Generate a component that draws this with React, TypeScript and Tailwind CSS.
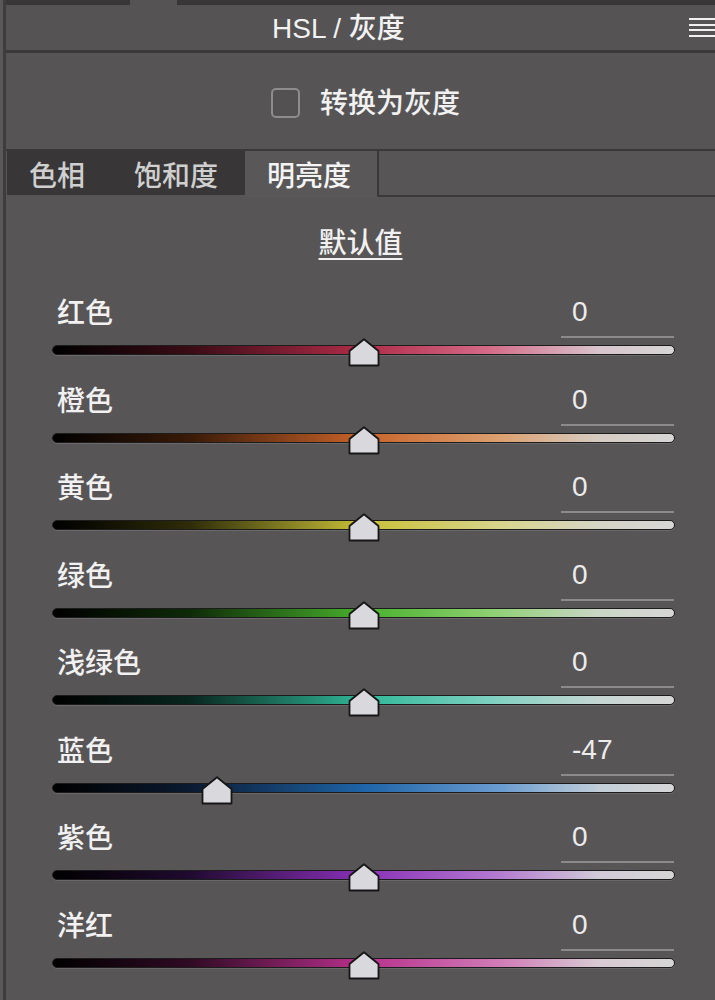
import React from "react";

type Channel = {
  name: string;
  value: number;
  track: string;
};

const channels: Channel[] = [
  {
    name: "红色",
    value: 0,
    track:
      "bg-[linear-gradient(to_right,#000_0%,#3a0c16_22%,#b02c48_50%,#d46a88_70%,#d8c4cc_88%,#d6d6d6_100%)]",
  },
  {
    name: "橙色",
    value: 0,
    track:
      "bg-[linear-gradient(to_right,#000_0%,#3a1a08_22%,#c8632a_50%,#dca070_72%,#d6ccc2_88%,#d6d6d6_100%)]",
  },
  {
    name: "黄色",
    value: 0,
    track:
      "bg-[linear-gradient(to_right,#000_0%,#2e2c08_22%,#c8c038_50%,#d8d48c_72%,#d6d4c6_88%,#d6d6d6_100%)]",
  },
  {
    name: "绿色",
    value: 0,
    track:
      "bg-[linear-gradient(to_right,#000_0%,#0e2a08_22%,#48b02c_50%,#8cd070_70%,#cad6c6_88%,#d6d6d6_100%)]",
  },
  {
    name: "浅绿色",
    value: 0,
    track:
      "bg-[linear-gradient(to_right,#000_0%,#08261e_22%,#30b898_50%,#7cd0c0_70%,#c6d6d2_88%,#d6d6d6_100%)]",
  },
  {
    name: "蓝色",
    value: -47,
    track:
      "bg-[linear-gradient(to_right,#000_0%,#0a1a30_22%,#1e64a8_50%,#6a9cd0_72%,#c2ced8_88%,#d6d6d6_100%)]",
  },
  {
    name: "紫色",
    value: 0,
    track:
      "bg-[linear-gradient(to_right,#000_0%,#200a30_22%,#8a30b8_50%,#b47cd0_72%,#d2cad8_88%,#d6d6d6_100%)]",
  },
  {
    name: "洋红",
    value: 0,
    track:
      "bg-[linear-gradient(to_right,#000_0%,#300a24_22%,#b8308c_50%,#d07cb8_72%,#d8cad2_88%,#d6d6d6_100%)]",
  },
];

function Thumb() {
  return (
    <svg width="32" height="29" viewBox="0 0 32 29" className="block">
      <polygon
        points="16,1.2 30.5,13 30.5,27.5 1.5,27.5 1.5,13"
        fill="#d9d8dc"
        stroke="#161616"
        strokeWidth="1.8"
        strokeLinejoin="round"
      />
    </svg>
  );
}

function SliderRow({ ch }: { ch: Channel }) {
  const pct = ((ch.value + 100) / 200) * 100;
  return (
    <div className="h-[87.5px] flex flex-col shrink-0">
      <div className="h-[44px] flex justify-between">
        <div className="pl-[51px] pt-[3px] text-[28px] leading-[34px] font-medium text-[#f1f1f1]">
          {ch.name}
        </div>
        <div className="mr-[41px] w-[113px] h-[44px] border-b-2 border-[#8c8a8c] pl-[11px] pt-[1px] text-[28px] leading-[34px] text-[#ececec] font-['Liberation_Sans',sans-serif]">
          {ch.value}
        </div>
      </div>
      <div className="relative h-[28px] ml-[46px] mr-[40px]">
        <div
          className={`mt-[7px] h-[10px] rounded-full border border-[#1c1c1c] shadow-[0_1px_0_#6a686a] ${ch.track}`}
        />
        <div
          className="absolute top-0 -translate-x-1/2"
          style={{ left: `${pct}%` }}
        >
          <Thumb />
        </div>
      </div>
    </div>
  );
}

export default function App() {
  return (
    <div className="w-[715px] h-[1000px] overflow-hidden flex bg-[#585557] font-['Liberation_Sans','Noto_Sans_CJK_SC',sans-serif]">
      {/* left gutter and panel edge */}
      <div className="w-[3px] shrink-0 bg-[#5a5859]" />
      <div className="w-[3px] shrink-0 bg-[#3e3c3d]" />

      <div className="flex-1 flex flex-col min-w-0">
        {/* top strip */}
        <div className="h-[5px] flex shrink-0">
          <div className="w-[124px] bg-[#383637]" />
          <div className="w-[47px] bg-[#555354]" />
          <div className="flex-1 bg-[#383637]" />
        </div>

        {/* header */}
        <div className="relative h-[45px] shrink-0 bg-[#555354] flex items-center">
          <div className="pl-[266px] pt-[3px] text-[28px] leading-[42px] font-medium text-[#f2f2f2]">
            HSL / 灰度
          </div>
          <div className="absolute right-[-4px] top-[13px] w-[30px] flex flex-col gap-[3.5px]">
            <div className="h-[2px] bg-[#f0f0f0]" />
            <div className="h-[2px] bg-[#f0f0f0]" />
            <div className="h-[2px] bg-[#f0f0f0]" />
            <div className="h-[2px] bg-[#f0f0f0]" />
          </div>
        </div>
        <div className="h-[3px] shrink-0 bg-[#3b393a]" />

        {/* grayscale toggle */}
        <div className="h-[96px] shrink-0 bg-[#575456] flex items-center pl-[265px] pt-[3px]">
          <div className="w-[29px] h-[30px] rounded-[5px] border-2 border-[#8e8c8e] bg-[#545153]" />
          <div className="ml-[20px] pt-[3px] text-[28px] leading-[34px] font-medium text-[#f1f1f1]">
            转换为灰度
          </div>
        </div>

        {/* tabs */}
        <div className="h-[48px] shrink-0 flex border-t-2 border-[#3a3839]">
          <div className="ml-[1px] h-[44px] flex bg-[#383637] text-[#cfcfcf] font-medium">
            <div className="w-[106px] pl-[22px] pt-[5px] text-[28px] leading-[41px]">
              色相
            </div>
            <div className="w-[132px] pl-[21px] pt-[5px] text-[28px] leading-[41px]">
              饱和度
            </div>
          </div>
          <div className="w-[132px] h-[46px] bg-[#5a5759] pl-[22px] pt-[5px] text-[28px] leading-[41px] font-medium text-[#f4f4f4]">
            明亮度
          </div>
          <div className="flex-1 h-[46px] border-l-2 border-b-2 border-[#3a3839] bg-[#585557]" />
        </div>

        {/* body */}
        <div className="flex-1 flex flex-col bg-[#585557]">
          <div className="h-[97px] shrink-0 flex justify-center pt-[33px]">
            <span className="text-[28px] leading-[28px] h-[30px] font-medium text-[#f1f1f1] underline underline-offset-[5px] decoration-[2px]">
              默认值
            </span>
          </div>
          {channels.map((ch) => (
            <SliderRow key={ch.name} ch={ch} />
          ))}
        </div>
      </div>
    </div>
  );
}
